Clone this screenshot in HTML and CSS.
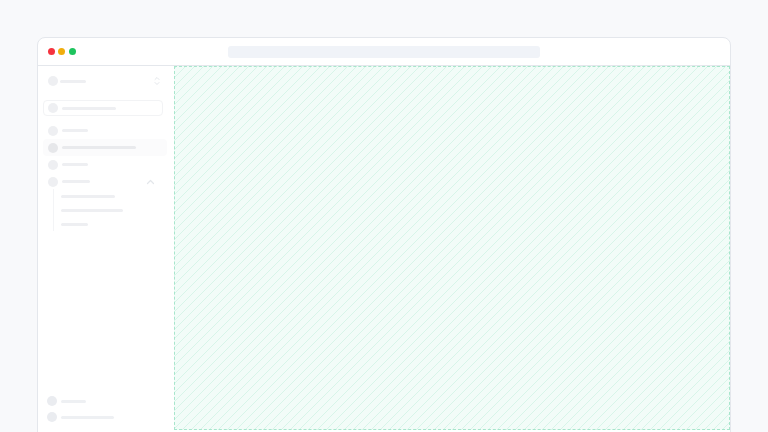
FILE: index.html
```
<!DOCTYPE html>
<html>
<head>
<meta charset="utf-8">
<link rel="stylesheet" href="styles.css">
</head>
<body>
<div class="window">
  <div class="titlebar">
    <div class="dots">
      <span class="dot red"></span>
      <span class="dot amber"></span>
      <span class="dot green"></span>
    </div>
    <div class="url"></div>
    <div></div>
  </div>
  <div class="main">
    <aside class="sidebar">
      <div class="row top">
        <span class="circ"></span><span class="line w26"></span>
        <svg class="updown" width="8" height="10" viewBox="0 0 8 10"><path d="M2 3.5 L4 1.5 L6 3.5 M2 6.5 L4 8.5 L6 6.5" fill="none" stroke="#e3e6ea" stroke-width="1" stroke-linecap="round" stroke-linejoin="round"/></svg>
      </div>
      <div class="search">
        <span class="circ"></span><span class="line w54"></span>
      </div>
      <div class="list">
        <div class="row"><span class="circ"></span><span class="line w26"></span></div>
        <div class="row active"><span class="circ"></span><span class="line w74"></span></div>
        <div class="row"><span class="circ"></span><span class="line w26"></span></div>
        <div class="row">
          <span class="circ"></span><span class="line w28"></span>
          <svg class="chev" width="9" height="6" viewBox="0 0 9 6"><path d="M1.5 4.5 L4.5 1.5 L7.5 4.5" fill="none" stroke="#e3e6ea" stroke-width="1.2" stroke-linecap="round" stroke-linejoin="round"/></svg>
        </div>
        <div class="sub">
          <div class="subrow"><span class="line w54"></span></div>
          <div class="subrow"><span class="line w62"></span></div>
          <div class="subrow"><span class="line w27"></span></div>
        </div>
      </div>
      <div class="bottom">
        <div class="row"><span class="circ dark"></span><span class="line dark w25"></span></div>
        <div class="row"><span class="circ dark"></span><span class="line dark w53"></span></div>
      </div>
    </aside>
    <section class="canvas"></section>
  </div>
</div>
</body>
</html>
```
FILE: styles.css
```
html, body {
  margin: 0;
  padding: 0;
  height: 432px;
  overflow: hidden;
  background: #f8f9fb;
  font-family: "Inter", "Liberation Sans", sans-serif;
}
body {
  padding: 37px 37px 0 37px;
  box-sizing: border-box;
}
.window {
  width: 694px;
  height: 420px;
  box-sizing: border-box;
  border: 1.5px solid #e4e7ec;
  border-radius: 8px;
  background: #ffffff;
  overflow: hidden;
  display: flex;
  flex-direction: column;
}
.titlebar {
  height: 28px;
  flex: none;
  box-sizing: border-box;
  border-bottom: 1px solid #e4e7ec;
  display: grid;
  grid-template-columns: 1fr 312px 1fr;
  align-items: center;
  padding: 0 9.5px;
}
.dots {
  display: flex;
  gap: 3.5px;
  align-items: center;
}
.dot {
  width: 7px;
  height: 7px;
  border-radius: 50%;
  display: block;
}
.red { background: #f5333f; }
.amber { background: #f0ad0d; }
.green { background: #1ec45e; }
.url {
  height: 12px;
  border-radius: 3px;
  background: #f0f3f8;
}
.main {
  display: flex;
  height: 364px;
  flex: none;
}
.sidebar {
  width: 136px;
  flex: none;
  box-sizing: border-box;
  padding: 7px 5px 5px 5px;
  display: flex;
  flex-direction: column;
}
.row {
  height: 17px;
  display: flex;
  align-items: center;
  gap: 4px;
  padding: 0 5px;
  border-radius: 4px;
  position: relative;
}
.row.top {
  height: 16px;
  gap: 2px;
}
.circ {
  width: 10px;
  height: 10px;
  border-radius: 50%;
  background: #eeeff2;
  flex: none;
  display: block;
}
.line {
  height: 3px;
  border-radius: 2px;
  background: #eeeff2;
  display: block;
}
.w25 { width: 25px; }
.w26 { width: 26px; }
.w27 { width: 27px; }
.w28 { width: 28px; }
.w53 { width: 53px; }
.w54 { width: 54px; }
.w62 { width: 62px; }
.w74 { width: 74px; }
.updown {
  margin-left: auto;
  margin-right: 3px;
}
.chev {
  margin-left: auto;
  margin-right: 9px;
}
.search {
  margin-top: 11px;
  width: 120px;
  height: 16px;
  box-sizing: border-box;
  border: 1px solid #f2f3f5;
  border-radius: 4px;
  display: flex;
  align-items: center;
  gap: 4px;
  padding: 0 4px;
}
.list {
  margin-top: 6px;
  display: flex;
  flex-direction: column;
}
.row.active {
  background: #fbfbfc;
  margin-right: 2px;
}
.row.active .circ { background: #e6e7ea; }
.row.active .line { background: #e9eaed; }
.sub {
  margin-left: 10px;
  margin-top: -1px;
  border-left: 1px solid #f3f4f6;
  padding-left: 7px;
  display: flex;
  flex-direction: column;
}
.subrow {
  height: 14px;
  display: flex;
  align-items: center;
}
.bottom {
  margin-top: auto;
  display: flex;
  flex-direction: column;
}
.bottom .row { height: 16px; padding-left: 4px; }
.circ.dark { background: #eaecf0; }
.line.dark { background: #eef0f3; }
.canvas {
  flex: 1;
  margin-right: 0.5px;
  box-sizing: border-box;
  border: 1px dashed #a8e6cc;
  background-color: #f2fcf8;
  background-image: linear-gradient(135deg, #d8f5e9 0%, #d8f5e9 7%, transparent 7%, transparent 50%, #d8f5e9 50%, #d8f5e9 57%, transparent 57%, transparent 100%);
  background-size: 9px 9px;
}
```
